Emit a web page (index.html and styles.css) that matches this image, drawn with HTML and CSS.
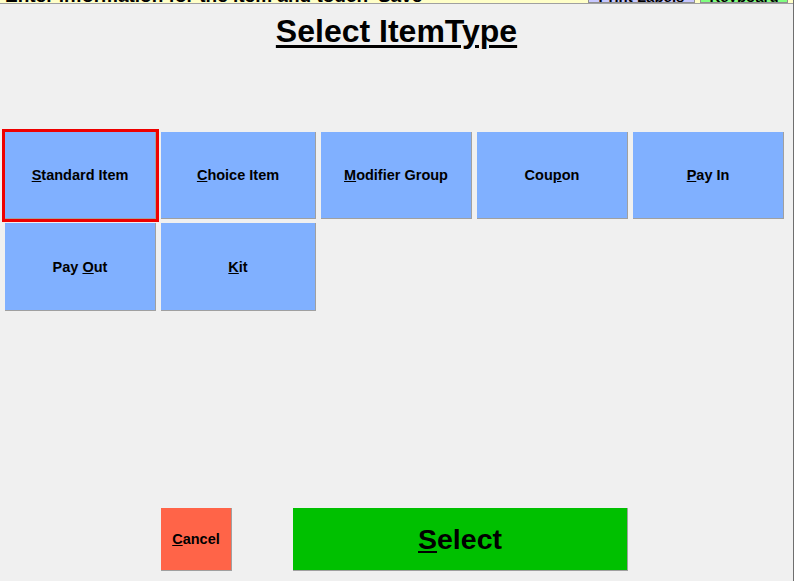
FILE: index.html
```html
<!DOCTYPE html>
<html lang="en">
<head>
<meta charset="utf-8">
<title>Select ItemType</title>
<link rel="stylesheet" href="styles.css">
</head>
<body>
<div class="window">
  <div class="topstrip">
    <div class="hint">Enter information for the item and touch 'Save'</div>
    <div class="topbtn labels">Print Labels</div>
    <div class="topbtn keyboard">Keyboard</div>
  </div>
  <h1 class="title">Select ItemType</h1>
  <div class="grid">
    <button class="item selected"><u>S</u>tandard Item</button>
    <button class="item"><u>C</u>hoice Item</button>
    <button class="item"><u>M</u>odifier Group</button>
    <button class="item">Cou<u>p</u>on</button>
    <button class="item"><u>P</u>ay In</button>
    <button class="item">Pay <u>O</u>ut</button>
    <button class="item"><u>K</u>it</button>
  </div>
  <div class="footer">
    <button class="cancel"><u>C</u>ancel</button>
    <button class="select"><u>S</u>elect</button>
  </div>
</div>
</body>
</html>
```
FILE: styles.css
```css
html, body {
  margin: 0;
  padding: 0;
  background: #f0f0f0;
}
body {
  font-family: "Liberation Sans", Arial, sans-serif;
  color: #000;
}
.window {
  height: 581px;
  box-sizing: border-box;
  display: flex;
  flex-direction: column;
  border-right: 1px solid #6e6e6e;
  overflow: hidden;
}
.topstrip {
  height: 3px;
  flex: none;
  overflow: hidden;
  display: flex;
  align-items: flex-end;
  background: #ffffc8;
  border-bottom: 1px solid #a0a0a0;
  padding-left: 5px;
}
.hint {
  flex: none;
  width: 583px;
  font-weight: bold;
  font-size: 19px;
  line-height: 15px;
  height: 15px;
  white-space: nowrap;
}
.topbtn {
  flex: none;
  height: 16px;
  box-sizing: border-box;
  border: 1px solid #909090;
  font-weight: bold;
  font-size: 15px;
  line-height: 18px;
  text-align: center;
  overflow: hidden;
}
.labels {
  width: 107px;
  background: #c8c8ff;
}
.keyboard {
  width: 88px;
  margin-left: 5px;
  background: #80ff80;
}
.title {
  margin: 9px 0 0;
  text-align: center;
  font-size: 32px;
  line-height: 37px;
  font-weight: bold;
  text-decoration: underline;
  text-decoration-thickness: 3px;
  text-underline-offset: 3px;
}
.grid {
  margin-top: 82px;
  padding-left: 5px;
  display: grid;
  grid-template-columns: 151px 155px 151px 151px 151px;
  grid-template-rows: 87px 88px;
  column-gap: 5px;
  row-gap: 4px;
}
button {
  font-family: "Liberation Sans", Arial, sans-serif;
  font-weight: bold;
  color: #000;
  padding: 0;
  margin: 0;
  cursor: pointer;
}
.item {
  background: #80b0ff;
  border: 0;
  border-right: 1px solid #a0a0a0;
  border-bottom: 1px solid #a0a0a0;
  font-size: 14.5px;
}
.item.selected {
  outline: 3px solid #ee0000;
  outline-offset: 0;
}
.footer {
  margin-top: auto;
  padding: 0 0 10px 161px;
  display: flex;
  gap: 61px;
}
.cancel {
  width: 71px;
  height: 63px;
  background: #ff6448;
  border: 0;
  border-right: 1px solid #a0a0a0;
  border-bottom: 1px solid #a0a0a0;
  font-size: 14.5px;
}
.select {
  width: 335px;
  height: 63px;
  background: #00c000;
  border: 0;
  border-right: 1px solid #a0a0a0;
  border-bottom: 1px solid #a0a0a0;
  font-size: 28.5px;
}
```
